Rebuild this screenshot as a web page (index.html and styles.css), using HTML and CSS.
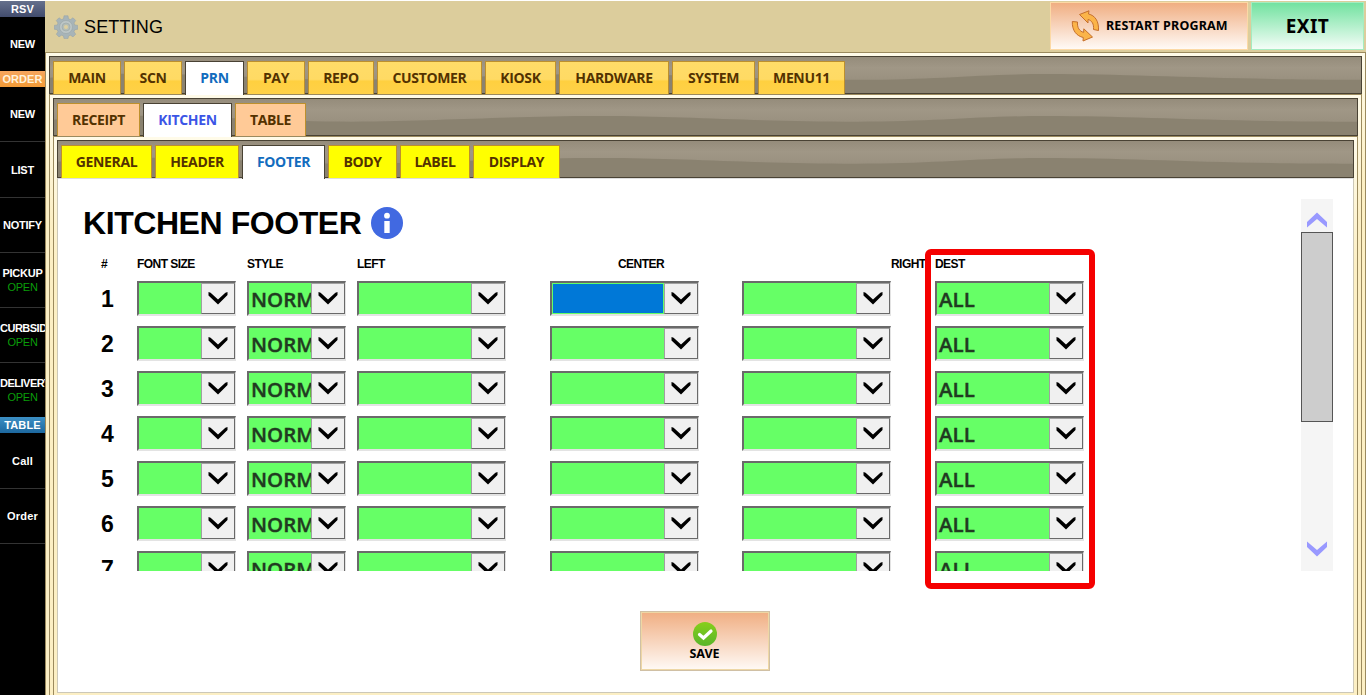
FILE: index.html
```html
<!DOCTYPE html>
<html lang="en">
<head>
<meta charset="utf-8">
<title>Setting</title>
<link rel="stylesheet" href="styles.css">
</head>
<body>
<svg class="defs" width="0" height="0">
  <symbol id="wave" viewBox="0 0 1313 38" preserveAspectRatio="none">
    <path d="M0 22C40 18 70 17 110 18C180 19 230 24 300 24C400 23 460 18 550 18C640 18 700 24 810 24C890 24 930 18 1000 18C1090 18 1170 24 1313 24V38H0Z" fill="#8a8270"/>
  </symbol>
  <symbol id="chev" viewBox="0 0 20 14"><path d="M.5 1Q3 1.300 4 3L10 8.500L16 3Q17 1.300 19.500 1V4L10 13.500L.5 4.500Z"/></symbol>
</svg>
<div class="app">
  <nav class="side">
    <div class="cap cap-rsv">RSV</div>
    <div class="item first">NEW</div>
    <div class="cap cap-order">ORDER</div>
    <div class="item">NEW</div>
    <div class="item tall">LIST</div>
    <div class="item">NOTIFY</div>
    <div class="item">PICKUP<span>OPEN</span></div>
    <div class="item"><em>CURBSIDE</em><span>OPEN</span></div>
    <div class="item last"><em>DELIVERY</em><span>OPEN</span></div>
    <div class="cap cap-table">TABLE</div>
    <div class="item tall mixed">Call</div>
    <div class="item mixed">Order</div>
  </nav>
  <main class="main">
    <header class="top">
      <svg class="gear" width="24" height="24" viewBox="0 0 24 24">
        <g fill="#a7b4b8" stroke="#98a5a8" stroke-width=".6">
          <path d="M10 .8h4l.5 3 2 .8 2.500-1.800 2.700 2.700L20 8l.8 2 3 .4v3.800l-3 .5-.8 2 1.700 2.500-2.700 2.700-2.500-1.700-2 .8-.5 2.600h-4l-.5-2.600-2-.8L5 21.900l-2.700-2.700L4 16.700l-.8-2-3-.5v-3.800l3-.4L4 8 2.300 5.500 5 2.800l2.500 1.800 2-.8z"/>
          <circle cx="12" cy="12" r="6.500" fill="#bcc6c6"/>
          <circle cx="12" cy="12" r="4" fill="#b4bdb6"/>
        </g>
        <circle cx="12" cy="12" r="2" fill="#ddcf9f"/>
      </svg>
      <h1>SETTING</h1>
      <button class="restart">
        <svg width="30" height="32" viewBox="0 0 30 32" fill="#fbb449" stroke="#c46f2c" stroke-width="1" stroke-linejoin="round">
          <path d="M8.500 4.500L18 .8L17.500 4C24 5.500 28 11 27.500 20.500L22.500 19.500C23 14 21 10.500 17 9.500L17 13Z"/>
          <path d="M21.500 27L12 31L12.300 27.500C5.500 26 1 20.500 1.300 11.500L6.500 12C6 17.500 8.500 21.500 12.700 22.300L12.800 18.800Z"/>
        </svg>
        <span>RESTART PROGRAM</span>
      </button>
      <button class="exit">EXIT</button>
    </header>
    <section class="frame">
      <div class="bar bar-main">
        <svg class="wave"><use href="#wave"/></svg>
        <a style="width:68px">MAIN</a><a style="width:58px">SCN</a><a class="on" style="width:59px">PRN</a><a style="width:58px">PAY</a><a style="width:66px">REPO</a><a style="width:105px">CUSTOMER</a><a style="width:71px">KIOSK</a><a style="width:110px">HARDWARE</a><a style="width:83px">SYSTEM</a><a style="width:87px">MENU11</a>
      </div>
      <section class="frame">
        <div class="bar bar-sub">
          <svg class="wave"><use href="#wave"/></svg>
          <a style="width:83px">RECEIPT</a><a class="on" style="width:89px">KITCHEN</a><a style="width:71px">TABLE</a>
        </div>
        <section class="frame">
          <div class="bar bar-page">
            <svg class="wave"><use href="#wave"/></svg>
            <a style="width:91px">GENERAL</a><a style="width:84px">HEADER</a><a class="on" style="width:83px">FOOTER</a><a style="width:69px">BODY</a><a style="width:70px">LABEL</a><a style="width:87px">DISPLAY</a>
          </div>
          <div class="panel">
            <div class="content">
              <div class="form">
                <div class="title"><h2>KITCHEN FOOTER</h2>
                  <svg width="32" height="32" viewBox="0 0 32 32"><circle cx="16" cy="16" r="16" fill="#4169e1"/><circle cx="16" cy="8.700" r="2.900" fill="#fff"/><path d="M13.300 14h5.400v12h-5.400z" fill="#fff"/></svg>
                </div>
                <div class="grid heads"><b class="num">#</b><b>FONT SIZE</b><b>STYLE</b><b>LEFT</b><b class="center">CENTER</b><b class="right">RIGHT</b><b>DEST</b></div>
                <div class="rows" id="rows"></div>
                <div class="highlight"></div>
              </div>
              <div class="scroll">
                <svg width="20" height="16" viewBox="0 0 20 16"><path d="M0 10L10 .5L20 10V15.500L10 7L0 15.500Z"/></svg>
                <i></i>
                <svg class="down" width="20" height="16" viewBox="0 0 20 16"><path d="M0 .5L10 9L20 .5V6L10 15.500L0 6Z"/></svg>
              </div>
            </div>
            <button class="save">
              <svg width="24" height="24" viewBox="0 0 24 24"><defs><linearGradient id="g" x2="0" y2="1"><stop stop-color="#87cf1b"/><stop offset="1" stop-color="#59b52b"/></linearGradient></defs><circle cx="12" cy="12" r="12" fill="url(#g)"/><path d="M6.500 12.500L10.500 16L18 9" fill="none" stroke="#fff" stroke-width="3.200" stroke-linecap="round"/></svg>
              <span>SAVE</span>
            </button>
          </div>
        </section>
      </section>
    </section>
  </main>
</div>
<script src="rows.js"></script>
</body>
</html>
```

FILE: styles.css
```css
* { box-sizing: border-box; }
body { margin: 0; background: #fff; overflow: hidden; font-family: "Liberation Sans", Arial, sans-serif; }
h1, h2 { margin: 0; }
button { font: inherit; color: #000; padding: 0; }
.defs { display: block; }
.app { display: flex; height: 695px; padding-top: 1px; overflow: hidden; }

.side { flex: 0 0 45px; background: #000; color: #fff; font-weight: bold; font-size: 11px; letter-spacing: -.25px; overflow: hidden; }
.cap { height: 16px; line-height: 16px; text-align: center; letter-spacing: .1px; }
.cap-rsv { background: linear-gradient(#65708c, #424c6d); }
.cap-order { background: linear-gradient(#f6a65e, #f39b37); color: #fff3dc; }
.cap-table { background: linear-gradient(#3c8fc4, #1d689f); }
.item { height: 55px; border-bottom: 1px solid #333; display: flex; flex-direction: column; align-items: center; justify-content: center; line-height: 14px; white-space: nowrap; }
.item.first { height: 54px; border: 0; }
.item.tall { height: 56px; }
.item.last { height: 54px; border: 0; }
.item span { color: #0a9c0a; font-weight: normal; }
.item em { align-self: flex-start; font-style: normal; letter-spacing: -.5px; }
.mixed { letter-spacing: .2px; }

.main { flex: 1; min-width: 0; display: flex; flex-direction: column; }
.top { flex: 0 0 51px; display: flex; align-items: center; padding: 0 2px 2px 9px; background: #dccd9c; }
.gear { margin-top: 3px; }
.top h1 { flex: 1; margin: 3px 0 0 6px; font-size: 18px; font-weight: normal; letter-spacing: .15px; }
.restart { width: 198px; height: 48px; display: flex; align-items: center; padding-left: 20px; border: 1px solid #fcd9a5; background: linear-gradient(#f0ae82, #fffaf6); font-family: "Noto Sans", sans-serif; font-weight: bold; }
.restart span { margin-left: 5px; font-size: 12.500px; letter-spacing: .17px; white-space: nowrap; }
.exit { width: 113px; height: 48px; margin-left: 3px; border: 1px solid #a5ecc0; background: linear-gradient(#72e2a0, #f4fdf7); font: bold 19px "Noto Sans", sans-serif; letter-spacing: .4px; }

.frame { border: 1px solid #9b8a5e; border-bottom: 0; padding: 3px 3px 0; background: linear-gradient(#fffbe9, #fcefc4 130px); flex: 1; min-height: 0; display: flex; flex-direction: column; }
.bar { position: relative; flex: 0 0 38px; height: 38px; display: flex; align-items: flex-start; gap: 3px; padding: 4px 0 0 3px; border: 1px solid #494234; background: linear-gradient(#958c7b, #a09786 30%, #9a9180 60%, #938a78); }
.wave { position: absolute; left: 0; top: 0; width: 100%; height: 36px; }
.bar a { position: relative; height: 33px; padding-top: 2px; border: 1px solid #bd902d; border-bottom: 0; color: #533200; font: bold 14px/28px "Open Sans", sans-serif; text-align: center; letter-spacing: -.35px; }
.bar-main a { background: linear-gradient(#ffdc68, #ffda64 54%, #ffd040 60%, #ffd148); }
.bar-sub a { background: #ffca97; }
.bar-page a { background: #ff0; }
.bar a.on { height: 34px; background: #fff; color: #126cbe; border-color: #494234; }
.bar-sub a.on { color: #3b55e6; }

.panel { height: 515px; border: 1px solid #ccc8b8; border-top-color: #ddd; background: #fff; display: flex; flex-direction: column; align-items: center; }
.content { align-self: stretch; height: 432px; display: flex; justify-content: space-between; padding: 20px 20px 0 26px; }
.form { position: relative; width: 1030px; height: 372px; }
.title { display: flex; align-items: center; height: 48px; gap: 11px; }
.title h2 { margin-left: -1px; font-size: 32px; line-height: 48px; letter-spacing: -.43px; width: 277px; white-space: nowrap; }
.grid { display: grid; grid-template-columns: 53px 110px 110px 193px 192px 193px 150px; }
.heads { height: 34px; line-height: 34px; font-size: 12px; letter-spacing: -.55px; }
.heads .num { padding-left: 17px; }
.heads .center { padding-left: 68px; }
.heads .right { padding-left: 149px; }
.rows { height: 290px; overflow: hidden; }
.row { height: 45px; }
.row .num { padding-left: 17px; font-size: 23px; line-height: 37px; font-weight: bold; }
.select { display: flex; width: 149px; height: 35px; border: 2px solid #6a6a6a; border-right-color: #e3e3e3; border-bottom-color: #e3e3e3; border-right-width: 1px; background: #6f6; }
.select.small { width: 99px; }
.value { flex: 1; min-width: 0; padding-left: 2px; overflow: hidden; font: 600 20.500px/33px "Open Sans", sans-serif; color: #213a21; -webkit-text-stroke: .4px #213a21; }
.value.selected { border: 1px solid #6f6; background: #0078d7; background-clip: padding-box; }
.arrow { flex: 0 0 34px; display: flex; justify-content: center; align-items: center; border: 1px solid #a0a0a0; border-right-color: #696969; border-bottom-color: #696969; background: #f0f0f0; }
.arrow svg { width: 20px; height: 14px; margin-bottom: 2px; }
.highlight { position: absolute; left: 841px; top: 50px; width: 170px; height: 340px; border: 6px solid #f50000; border-radius: 6px; }
.scroll { width: 32px; height: 372px; background: #f5f5f5; display: flex; flex-direction: column; align-items: center; padding-top: 13px; fill: #99f; }
.scroll i { width: 32px; height: 190px; margin-top: 4px; border: 1px solid #555; background: #cdcdcd; }
.scroll .down { margin-top: 119px; }
.save { width: 130px; height: 60px; margin-left: -2px; border: 1px solid #d0c0a5; outline: 1px solid #eed7a5; outline-offset: -2px; background: linear-gradient(#f0ae82, #fffaf6); display: flex; flex-direction: column; align-items: center; font: bold 12.500px/15px "Noto Sans", sans-serif; padding-top: 10px; }
```

FILE: rows.js
```javascript
const rows = document.getElementById('rows');
const columns = ['', 'NORMAL', '', '', '', 'ALL'];
for (let n = 1; n <= 7; n++) {
  const cells = columns.map((text, i) => {
    const size = i < 2 ? ' small' : '';
    const selected = n === 1 && i === 3 ? ' selected' : '';
    return `<div class="select${size}"><div class="value${selected}">${text}</div><div class="arrow"><svg><use href="#chev"/></svg></div></div>`;
  }).join('');
  rows.insertAdjacentHTML('beforeend', `<div class="grid row"><div class="num">${n}</div>${cells}</div>`);
}
```
